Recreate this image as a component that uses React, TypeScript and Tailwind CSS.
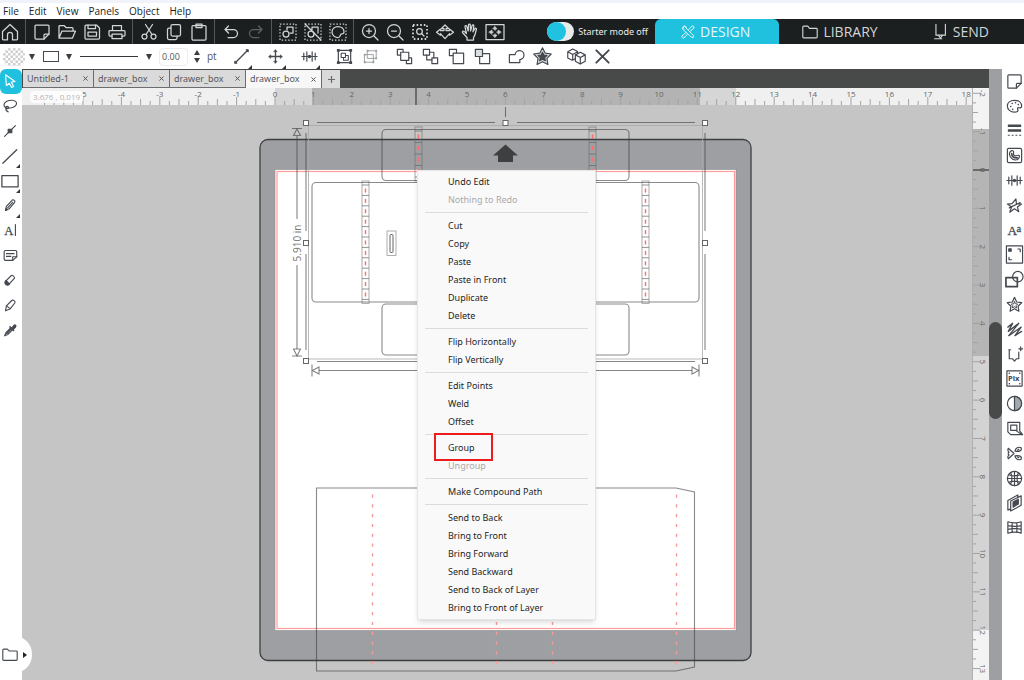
import { useState } from "react";
import type { ReactNode } from "react";

const UNIT = 38.4;

function Icon({ children, className = "size-5" }: { children: ReactNode; className?: string }) {
  return (
    <svg
      viewBox="0 0 20 20"
      className={`shrink-0 ${className}`}
      fill="none"
      stroke="currentColor"
      strokeWidth="1.25"
      strokeLinecap="round"
      strokeLinejoin="round"
      aria-hidden="true"
    >
      {children}
    </svg>
  );
}

type Tool = { label: string; icon: ReactNode; corner?: boolean; dim?: boolean };

const dashedBox = <rect x="2" y="2" width="16" height="16" strokeDasharray="1.4 1.8" strokeLinecap="butt" />;
const notePath = (
  <>
    <path d="M4 3h12a1 1 0 0 1 1 1v8l-5 5H4a1 1 0 0 1-1-1V4a1 1 0 0 1 1-1z" />
    <path d="M17 12h-4a1 1 0 0 0-1 1v4" />
  </>
);
const starPath = "M10 2.5l2.3 4.9 5.3.7-3.9 3.7 1 5.3-4.7-2.6-4.7 2.6 1-5.3-3.9-3.7 5.3-.7z";
const alignIcon = (
  <>
    <path d="M4 6.5v7M7.200 5v10M12.800 5v10M16 6.500v7M2 10h16" />
    <circle cx="10" cy="10" r="1.800" fill="currentColor" stroke="none" />
  </>
);

const mainGroups: Tool[][] = [
  [
    { label: "New", icon: notePath },
    { label: "Open", icon: <path d="M2 16V4.500a1 1 0 0 1 1-1h4l2 2h6a1 1 0 0 1 1 1V9M2 16l3-7h13.500l-3 7z" /> },
    {
      label: "Save",
      icon: (
        <>
          <path d="M3 4a1 1 0 0 1 1-1h10.500L17.500 6v10a1 1 0 0 1-1 1H4a1 1 0 0 1-1-1z" />
          <path d="M6 3v3.500h7.500V3M6 14v-4h8.500v4z" />
        </>
      ),
    },
    {
      label: "Print",
      icon: (
        <>
          <path d="M5.500 8.500V3.500h9v5M5 14H3a1 1 0 0 1-1-1V9.500a1 1 0 0 1 1-1h14a1 1 0 0 1 1 1V13a1 1 0 0 1-1 1h-2" />
          <path d="M5 12h10v4.500H5z" />
        </>
      ),
    },
  ],
  [
    {
      label: "Cut",
      icon: (
        <>
          <circle cx="5.500" cy="14.500" r="2.500" />
          <circle cx="14.500" cy="14.500" r="2.500" />
          <path d="M7 12.500L13.500 2.500M13 12.500L6.500 2.500" />
        </>
      ),
    },
    {
      label: "Copy",
      icon: (
        <>
          <rect x="7" y="2.500" width="9.500" height="11.500" rx="1.500" />
          <path d="M7 6H5a1.500 1.500 0 0 0-1.500 1.500V16A1.500 1.500 0 0 0 5 17.500h6.500A1.500 1.500 0 0 0 13 16v-2" />
        </>
      ),
    },
    {
      label: "Paste",
      icon: (
        <>
          <rect x="3" y="3.500" width="14" height="14.500" rx="1" />
          <path d="M7 2h6v3.500H7z" />
        </>
      ),
    },
  ],
  [
    { label: "Undo", icon: <path d="M7.500 4L4 7.500 7.500 11M4 7.500h8.500a4 4 0 0 1 0 8H7" /> },
    { label: "Redo", dim: true, icon: <path d="M12.500 4L16 7.500 12.500 11M16 7.500H7.500a4 4 0 0 0 0 8H13" /> },
  ],
  [
    {
      label: "Select all",
      icon: (
        <>
          {dashedBox}
          <path d="M9 5h6v6h-3M9 5v3" />
          <circle cx="8" cy="12" r="3" />
        </>
      ),
    },
    {
      label: "Deselect all",
      icon: (
        <>
          {dashedBox}
          <path d="M9 5h6v6M9 5v3M2 2l16 16" />
          <circle cx="8" cy="12" r="3" />
        </>
      ),
    },
    {
      label: "Select by color",
      icon: (
        <>
          {dashedBox}
          <path d="M10 4.500c3.500 0 6 2.300 6 5.500 0 1.500-1 1.800-2 1.800-1.800 0-1.500 1-1.800 2-.4 1.500-1.200 1.700-2.700 1.700-3 0-5.500-2.500-5.500-5.500s2.500-5.500 6-5.500z" />
        </>
      ),
    },
  ],
  [
    {
      label: "Zoom in",
      icon: (
        <>
          <circle cx="9" cy="9" r="6.500" />
          <path d="M14 14l4 4M6.500 9h5M9 6.500v5" />
        </>
      ),
    },
    {
      label: "Zoom out",
      icon: (
        <>
          <circle cx="9" cy="9" r="6.500" />
          <path d="M14 14l4 4M6.500 9h5" />
        </>
      ),
    },
    {
      label: "Zoom selection",
      icon: (
        <>
          <rect x="3" y="3" width="14" height="14" strokeWidth="1.800" strokeDasharray="1.600 2" strokeLinecap="butt" />
          <circle cx="9.500" cy="9.500" r="2.800" />
          <path d="M11.500 11.500l2.500 2.500" />
        </>
      ),
    },
    {
      label: "Drag zoom",
      icon: (
        <path d="M10 3L6.500 6.500H9v2H5.500V7L1.500 10.200l4 3v-1.500l4.500 5 4.500-5v1.500l4-3-4-3.200v1.500H11v-2h2.500z" />
      ),
    },
    {
      label: "Pan",
      icon: (
        <>
          <path d="M7 18v-2.500L2.500 10.500c-.6-1 .7-1.900 1.600-1.100L6.500 11.500 5 4.800c-.2-1.300 1.400-1.600 1.800-.4L8.200 9 8.500 2.900c.1-1.200 1.700-1.200 1.800 0L10.500 9l1.600-5.400c.4-1.200 1.900-.8 1.700.4L13 9.800l1.800-3.100c.6-1 2-.4 1.600.8L15 12.500c-.4 1.500-1 2.300-1.500 3V18z" />
        </>
      ),
    },
    {
      label: "Fit to window",
      icon: (
        <>
          <rect x="1" y="2.500" width="18" height="15" />
          <g fill="currentColor" strokeWidth=".6">
            <path d="M10 4.500l2 2.500H8zM10 15.500l2-2.500H8zM4 10l3-2v4zM16 10l-3-2v4z" />
          </g>
          <path d="M10 7v1M10 12v1M7 10h1M12 10h1" />
        </>
      ),
    },
  ],
];

const editGroups: Tool[][] = [
  [
    {
      label: "Group",
      icon: (
        <>
          <path d="M3.500 3.500h13v13h-13z" />
          <path d="M6.500 6.500h4.500v4.500H6.500zM11 9h3v5H9v-3" strokeWidth="1.100" />
          <g fill="currentColor" stroke="none">
            <path d="M2 2h3v3H2zM15 2h3v3h-3zM2 15h3v3H2zM15 15h3v3h-3z" />
          </g>
        </>
      ),
    },
    {
      label: "Ungroup",
      dim: true,
      icon: (
        <>
          <path d="M7 4h9v8H7zM4 8h9v8H4z" strokeWidth="1" />
          <g fill="currentColor" stroke="none">
            <path d="M6 3h2v2H6zM15 3h2v2h-2zM15 11h2v2h-2zM3 7h2v2H3zM3 15h2v2H3zM12 15h2v2h-2z" />
          </g>
        </>
      ),
    },
  ],
  [
    {
      label: "Bring to front",
      icon: (
        <>
          <path d="M6 8.500H2.500V2.500h6V5M12 15v2.500h5.500v-6H15" />
          <rect x="6" y="5.500" width="8.500" height="8.500" />
        </>
      ),
    },
    {
      label: "Bring forward",
      icon: (
        <>
          <rect x="2.500" y="2.500" width="6.500" height="6" />
          <rect x="11.500" y="11.500" width="6" height="6" />
          <path d="M9 5.500h4.500v6M6 8.500v5h5.500" />
        </>
      ),
    },
    {
      label: "Send backward",
      icon: (
        <>
          <path d="M6 9H2.500V2.500h7.500V6" />
          <rect x="6.500" y="6.500" width="11" height="11" />
        </>
      ),
    },
    {
      label: "Send to back",
      icon: (
        <>
          <rect x="2.500" y="2.500" width="7.500" height="7.500" fill="#dcdfe2" />
          <path d="M10 7h7.500v10.500H7V10" />
        </>
      ),
    },
  ],
  [
    {
      label: "Weld",
      icon: <path d="M2.500 8h6a4.700 4.700 0 1 1 5 5.200V16.500h-11z" />,
    },
    {
      label: "Offset",
      icon: (
        <>
          <path d="M10 .8l2.900 5.700 6.300.9-4.500 4.500 1 6.600L10 15.600l-5.700 2.900 1-6.600L.8 7.400l6.300-.9z" fill="#dcdfe2" />
          <path d="M10 5.500l1.400 3 3.300.4-2.400 2.300.7 3.200L10 12.800l-3 1.600.7-3.200-2.400-2.300 3.300-.4z" fill="currentColor" />
        </>
      ),
    },
  ],
  [
    {
      label: "Replicate",
      icon: (
        <>
          <path d="M8.500 12.500L5.500 14 .8 11.500V5L6 2l5.200 2.800V7M.8 5L6 7.800 11.200 5M6 7.800V13" />
          <path d="M14 5.500l5.200 2.800V15L14 18l-5.200-3V8.300zM8.800 8.300L14 11l5.200-2.700M14 11v7" />
        </>
      ),
    },
    { label: "Delete", icon: <path d="M3.500 3.500l13 13M16.500 3.500l-13 13" strokeWidth="2" /> },
  ],
];

const transformTools: Tool[] = [
  {
    label: "Line",
    corner: true,
    icon: (
      <>
        <path d="M4 16L16 4" strokeWidth="1.400" />
        <path d="M3 17v-2L5 17zM17 3v2L15 3z" fill="currentColor" />
      </>
    ),
  },
  {
    label: "Move",
    corner: true,
    icon: (
      <>
        <path d="M10 4v12M4 10h12" strokeWidth="1.400" />
        <path d="M10 2.800l1.800 2.200H8.200zM10 17.200l1.800-2.200H8.200zM2.800 10L5 8.200v3.600zM17.200 10L15 8.200v3.600z" fill="currentColor" strokeWidth=".5" />
      </>
    ),
  },
  { label: "Align", corner: true, icon: alignIcon },
];

const leftTools: Tool[] = [
  { label: "Select", icon: <path d="M5 3l10.500 7.500-4 .8 2.500 4.700-2.300 1.200-2.400-4.700L6 15z" /> },
  {
    label: "Lasso",
    icon: (
      <>
        <path d="M5.500 12C2.500 10.500 2.500 7 6 5c4-2 9.500-1.800 11 .8 1.300 2.700-1.500 5.500-5.500 6.200-2 .3-4 .2-5 0" />
        <path d="M6 10.500c1.500-.5 3 .5 2.500 1.700-.5 1-2.500 1-3 0-.3-.7 0-1.300.5-1.700zM5.300 12.500c0 2 .7 3.500 2.700 4" />
      </>
    ),
  },
  {
    label: "Edit points",
    icon: (
      <>
        <path d="M4 16L16 4" />
        <path d="M8 8h4v4H8z" fill="currentColor" />
      </>
    ),
  },
  { label: "Draw line", corner: true, icon: <path d="M2 18L17.500 3" strokeWidth="1.400" /> },
  { label: "Rectangle", corner: true, icon: <rect x="1" y="4" width="18" height="12.500" strokeWidth="1.400" /> },
  {
    label: "Pencil",
    corner: true,
    icon: (
      <>
        <path d="M5 16l1-4.500 6.500-7c1.200-1 3.700.9 2.700 2.500L9 14.200z" />
        <path d="M7.500 13l5.500-6" />
        <path d="M5 16l.7-2.200L7.300 15z" fill="currentColor" />
      </>
    ),
  },
  {
    label: "Text",
    icon: (
      <>
        <text x="3.500" y="15.500" fontSize="14" fontFamily="'Liberation Serif', serif" fill="currentColor" strokeWidth=".3">
          A
        </text>
        <path d="M16 4v12" />
      </>
    ),
  },
  {
    label: "Note",
    icon: (
      <>
        <path d="M5 5h11a1.500 1.500 0 0 1 1.500 1.500V12L13 16H5a1.500 1.500 0 0 1-1.500-1.500v-8A1.500 1.500 0 0 1 5 5z" />
        <path d="M6 8.500h8.500M6 11.500h5M17.500 12H13v4" />
      </>
    ),
  },
  {
    label: "Eraser",
    icon: (
      <>
        <path d="M5.500 11l6-6c1-.8 4 1.500 3.500 3l-6 6.500z" />
        <path d="M5.500 10.500l4 4c-1.500 1.700-3 1.500-4.300.3S4 12 5.500 10.500z" fill="currentColor" />
      </>
    ),
  },
  {
    label: "Knife",
    icon: (
      <>
        <path d="M5 16.500l1-5.500 6-6c1.500-1 4.200.5 3.500 2.500L10 14.500z" />
        <path d="M6 11l3.500 2.500" />
      </>
    ),
  },
  {
    label: "Eyedropper",
    icon: (
      <>
        <path d="M4 16.500l1.500-3.500L11 7.500l2 2L7.500 15z" />
        <path d="M10 6.500l4 4M12.500 8l2-3c1-1 2.500.3 1.500 1.500l-2.500 2.500z" fill="currentColor" strokeWidth="1.800" />
        <path d="M6.500 13.500l5-5" strokeWidth="2" />
      </>
    ),
  },
];

const rightTools: Tool[] = [
  { label: "Page setup", icon: notePath },
  {
    label: "Color fill",
    icon: (
      <>
        <path d="M10 3.500c4.500 0 7.500 2.500 7.500 6 0 2-1.500 2-3 1.800-1.700-.2-1.500 1-1 2.200.7 1.600-.8 2.500-3.500 2.500-4.500 0-7.500-3-7.500-6.500s3-6 7.500-6z" />
        <path d="M6 10h.1M7.500 6.800h.1M11 6h.1M14 8h.1M8 13h.1" strokeWidth="1.700" />
      </>
    ),
  },
  {
    label: "Line style",
    icon: (
      <>
        <path d="M3 5h14M3 10h14" strokeWidth="2.500" strokeLinecap="butt" />
        <path d="M3 15h14" strokeDasharray="2 2" strokeLinecap="butt" />
      </>
    ),
  },
  {
    label: "Trace",
    icon: (
      <>
        <rect x="2.500" y="2.500" width="15" height="15" rx="1.500" />
        <path d="M5.500 6c2-2 4-1 3.500 1.500s1.500 3.500 4 2.500 3 1.500 1 3.500-5.500 1.500-7.500-1S4 8 5.500 6z" />
        <path d="M7 8c0 3 2.500 5 6 4.500" strokeWidth="1.800" />
      </>
    ),
  },
  { label: "Align panel", icon: alignIcon },
  {
    label: "Transform",
    icon: <path d="M11.500 3l.5 5 5.500.5-4.500 3 1.500 5-4.500-3-5 3.500 2-5.500L2.500 8.500l5-.5zM4.500 12.500L16 7" />,
  },
  {
    label: "Text style",
    icon: (
      <g fill="currentColor" strokeWidth=".3" fontFamily="'Liberation Serif', serif">
        <text x="2.500" y="15" fontSize="14">
          A
        </text>
        <text x="12" y="11.500" fontSize="11">
          a
        </text>
      </g>
    ),
  },
  {
    label: "Registration marks",
    icon: (
      <>
        <rect x="1.500" y="1" width="17" height="18" />
        <path d="M4 4h2.500v2.500H4z" fill="currentColor" />
        <path d="M4.200 13v2.500H7M13.500 4.200H16V7" />
      </>
    ),
  },
  {
    label: "Modify",
    icon: (
      <>
        <rect x="1" y="8" width="12" height="9.500" strokeWidth="1.800" />
        <circle cx="13.500" cy="7" r="5.500" />
      </>
    ),
  },
  {
    label: "Offset panel",
    icon: (
      <>
        <path d={starPath} />
        <path d="M10 7l1 2.200 2.400.3-1.700 1.700.5 2.400-2.200-1.200-2.200 1.200.5-2.400-1.700-1.700 2.400-.3z" strokeWidth="1" />
      </>
    ),
  },
  {
    label: "Sketch",
    icon: <path d="M3 7.500L8 3.500 3.500 12 14.500 3.500 4 16.500 17 7.500 10.500 16.500 17.500 12" strokeWidth="1.400" />,
  },
  { label: "Cut settings", icon: <path d="M4.500 5v9.500H8l2 2.500 2-2.500h2.500V7.500M14.500 4h4M16.500 2v4M4 5h2" /> },
  {
    label: "PixScan",
    icon: (
      <>
        <rect x="2" y="2" width="16" height="16" />
        <path d="M4.500 4.500h.1M15.500 4.500h.1M4.500 15.500h.1M15.500 15.500h.1" strokeWidth="1.600" />
        <text x="3.200" y="13" fontSize="8" fontWeight="bold" fontFamily="'Open Sans', sans-serif" fill="currentColor" stroke="none">
          Pix
        </text>
      </>
    ),
  },
  {
    label: "Contrast",
    icon: (
      <>
        <circle cx="10" cy="10" r="7.500" />
        <path d="M10 2.500a7.500 7.500 0 0 1 0 15z" fill="#a3a9ae" />
      </>
    ),
  },
  {
    label: "Warp",
    icon: (
      <>
        <path d="M3 3.500h12.500v9l3 4H6L3 13.500zM12 12.500l6 4" />
        <rect x="6" y="6.500" width="6.500" height="5.500" />
      </>
    ),
  },
  {
    label: "Puzzle",
    icon: (
      <>
        <path d="M3.500 4.500L9.500 10l-6 5.500c-1-1.500-.3-3.500.8-4-1.300-1-1.300-2 0-3-1.100-.5-1.800-2.500-.8-4z" />
        <path d="M10.500 7.500c.5-3.500 3.500-5 6.500-3.500 1 3-2 4.500-6.500 3.500zM10.500 12.500c.5 3.500 3.500 5 6.500 3.500 1-3-2-4.500-6.500-3.500z" />
        <path d="M13 6.500l1.500-1M13 13.500l1.500 1" />
      </>
    ),
  },
  {
    label: "Sphere",
    icon: (
      <>
        <circle cx="10" cy="10" r="7.500" />
        <path d="M2.500 10h15M10 2.500v15M4 6c3.500 1.500 8.500 1.500 12 0M4 14c3.500-1.500 8.500-1.500 12 0" />
        <path d="M6 4c1.500 3.500 1.500 8.500 0 12M14 4c-1.500 3.500-1.500 8.500 0 12" />
      </>
    ),
  },
  {
    label: "Layers",
    icon: (
      <>
        <path d="M3 8l10.500-6v3M3 8v10l3-1.500M6 8.500L17 3v10L6 19z" />
        <path d="M8.500 9.500l5.500-3v5l-5.500 3.500z" fill="currentColor" />
      </>
    ),
  },
  {
    label: "Media layout",
    icon: <path d="M3 4c4.500 1.500 9.500 1.500 14 0v12c-4.500-1.500-9.500-1.500-14 0zM3 8c4.500 1 9.500 1 14 0M3 12c4.500-1 9.500-1 14 0M7.500 5v10M12.500 5v10" />,
  },
];

const contextMenu: { label: string; disabled?: boolean }[][] = [
  [{ label: "Undo Edit" }, { label: "Nothing to Redo", disabled: true }],
  [
    { label: "Cut" },
    { label: "Copy" },
    { label: "Paste" },
    { label: "Paste in Front" },
    { label: "Duplicate" },
    { label: "Delete" },
  ],
  [{ label: "Flip Horizontally" }, { label: "Flip Vertically" }],
  [{ label: "Edit Points" }, { label: "Weld" }, { label: "Offset" }],
  [{ label: "Group" }, { label: "Ungroup", disabled: true }],
  [{ label: "Make Compound Path" }],
  [
    { label: "Send to Back" },
    { label: "Bring to Front" },
    { label: "Bring Forward" },
    { label: "Send Backward" },
    { label: "Send to Back of Layer" },
    { label: "Bring to Front of Layer" },
  ],
];

function Corner() {
  return (
    <svg viewBox="0 0 4 4" className="absolute right-0.5 bottom-0 size-1" aria-hidden="true">
      <path d="M4 0v4H0z" fill="#33373c" />
    </svg>
  );
}

function DownArrow({ label }: { label: string }) {
  return (
    <button aria-label={label} className="flex h-full w-[14px] items-center justify-center">
      <svg viewBox="0 0 6 6" className="size-[6px]" aria-hidden="true">
        <path d="M0 0h6L3 6z" fill="#3b3f45" />
      </svg>
    </button>
  );
}

function MenuBar() {
  return (
    <nav className="flex h-4 items-center gap-[10px] bg-white px-[3px] text-[10px] leading-4 text-[#222]">
      {["File", "Edit", "View", "Panels", "Object", "Help"].map((item) => (
        <button key={item}>{item}</button>
      ))}
    </nav>
  );
}

function MainBar() {
  const [starter, setStarter] = useState(false);

  return (
    <header className="flex h-[25px] items-stretch bg-[#1b1f20] text-[#d3d6d7]">
      <div className="flex w-[26px] border-r border-[#55595a]">
        <button aria-label="Home" className="flex w-5 items-center justify-center">
          <Icon>
            <path d="M2.500 9.500L10 2.500l7.500 7V17a.8.8 0 0 1-.8.8h-4.200v-5a2.500 2.500 0 0 0-5 0v5H3.300a.8.8 0 0 1-.8-.8z" />
          </Icon>
        </button>
      </div>
      {mainGroups.map((group, i) => (
        <div key={i} className="flex border-r border-[#55595a] px-[3px] last-of-type:border-0">
          {group.map((tool) => (
            <button
              key={tool.label}
              aria-label={tool.label}
              className={`flex w-[25px] items-center justify-center ${tool.dim ? "text-[#5d6162]" : ""}`}
            >
              <Icon>{tool.icon}</Icon>
            </button>
          ))}
        </div>
      ))}
      <label className="ml-auto flex items-center gap-1 pr-[7px] font-['Noto_Sans','Open_Sans',sans-serif] text-[9px] whitespace-nowrap text-[#eceeee]">
        <input
          type="checkbox"
          role="switch"
          checked={starter}
          onChange={(e) => setStarter(e.target.checked)}
          className="h-[19px] w-[27px] appearance-none rounded-full bg-[#e9eaea] before:block before:size-[19px] before:rounded-full before:bg-[#1fc3e0] checked:before:ml-2"
        />
        Starter mode off
      </label>
      <nav className="flex w-[369px] text-[14px]">
        <a href="#design" className="flex flex-1 items-center justify-center gap-1 rounded-t-md bg-[#1fc1de] pr-1 text-[#e4f8fc]">
          <Icon className="size-4">
            <path d="M3 5.500L5.500 3 17 14.500 16.500 17 14.500 16.500zM11 7l4-4.500c1.500-.5 3 1 2.500 2.500L13 9M7 11l-4.500 4c-.5 1.500 1 3 2.500 2.500L9 13M4.500 6.500c-2-2-.5-4.500 1.500-4s2 2 2 3" />
          </Icon>
          DESIGN
        </a>
        <a href="#library" className="flex flex-1 items-center justify-center gap-1">
          <Icon className="size-[18px]">
            <path d="M2 4.500a1 1 0 0 1 1-1h4.500l2 2.500H17a1 1 0 0 1 1 1v8.500a1 1 0 0 1-1 1H3a1 1 0 0 1-1-1z" />
          </Icon>
          LIBRARY
        </a>
        <a href="#send" className="flex flex-1 items-center justify-center gap-1 pr-1">
          <Icon className="size-[18px]">
            <path d="M5.500 1.500v12H8l2.500 3 2.500-3h3v-12M4 17.500h8M8 13.500h5" />
          </Icon>
          SEND
        </a>
      </nav>
    </header>
  );
}

function ToolButton({ tool }: { tool: Tool }) {
  return (
    <button
      aria-label={tool.label}
      className={`relative flex h-full w-[26px] items-center justify-center ${tool.dim ? "text-[#9a9da1]" : ""}`}
    >
      <Icon className="size-[19px]">{tool.icon}</Icon>
      {tool.corner && <Corner />}
    </button>
  );
}

function StyleBar() {
  return (
    <div className="flex h-[25px] items-center bg-white pl-[3px] text-[#44484f]">
      <button aria-label="Fill color" className="w-[22px]">
        <svg viewBox="0 0 22 18" className="h-[18px] w-[22px]" aria-hidden="true">
          <defs>
            <pattern id="checker" width="5" height="5" patternUnits="userSpaceOnUse">
              <path d="M0 0h2.500v2.500H0zM2.500 2.500h2.500v2.500H2.500z" fill="#cfcfcf" />
            </pattern>
          </defs>
          <rect width="22" height="18" rx="7" fill="url(#checker)" />
        </svg>
      </button>
      <DownArrow label="Fill options" />
      <button aria-label="Line color" className="flex w-[23px] justify-center">
        <span className="h-[11px] w-4 border border-[#44484f]" />
      </button>
      <DownArrow label="Line color options" />
      <button aria-label="Line style" className="flex w-[66px] justify-center">
        <span className="h-px w-[58px] bg-[#33373c]" />
      </button>
      <DownArrow label="Line style options" />
      <input
        aria-label="Line thickness"
        defaultValue="0.00"
        className="ml-[3px] h-[18px] w-[29px] rounded-sm border border-[#ececec] px-0.5 text-[9px] text-[#555]"
      />
      <div className="ml-1 flex w-[10px] flex-col items-center gap-[3px]">
        <button aria-label="Increase thickness">
          <svg viewBox="0 0 6 5" className="h-[5px] w-[6px]" aria-hidden="true">
            <path d="M0 5h6L3 0z" fill="#3b3f45" />
          </svg>
        </button>
        <button aria-label="Decrease thickness">
          <svg viewBox="0 0 6 5" className="h-[5px] w-[6px]" aria-hidden="true">
            <path d="M0 0h6L3 5z" fill="#3b3f45" />
          </svg>
        </button>
      </div>
      <span className="w-[26px] pl-[5px] text-[10px] text-[#555]">pt</span>
      <div className="flex h-full gap-2">
        {transformTools.map((tool) => (
          <ToolButton key={tool.label} tool={tool} />
        ))}
      </div>
      <div className="ml-[9px] flex h-full gap-2">
        {editGroups.map((group, i) => (
          <div key={i} className="flex">
            {group.map((tool) => (
              <ToolButton key={tool.label} tool={tool} />
            ))}
          </div>
        ))}
      </div>
    </div>
  );
}

function DocumentTabs() {
  return (
    <div className="flex h-[19px] bg-[#484a49] pt-px pl-px text-[9px] text-[#55585c]">
      {["Untitled-1", "drawer_box", "drawer_box", "drawer_box"].map((name, i) => (
        <div
          key={i}
          className={`flex items-center justify-between border-r border-[#6b6d6e] pr-[5px] pl-1 ${i === 0 ? "w-[71px]" : "w-[76px]"} ${
            i === 3 ? "bg-[#f7f7f7]" : "border-b bg-[#dadada]"
          }`}
        >
          <button className="font-['Noto_Sans','Open_Sans',sans-serif] leading-4">{name}</button>
          <button aria-label={`Close ${name}`}>
            <svg viewBox="0 0 6 6" className="size-[5px]" aria-hidden="true">
              <path d="M.5.5l5 5M5.500.5l-5 5" stroke="#55585c" strokeWidth="1.200" />
            </svg>
          </button>
        </div>
      ))}
      <button aria-label="New document" className="flex w-[18px] items-center justify-center bg-[#dadada]">
        <svg viewBox="0 0 7 7" className="size-[7px]" aria-hidden="true">
          <path d="M3.500 0v7M0 3.500h7" stroke="#66696d" strokeWidth="1.200" />
        </svg>
      </button>
    </div>
  );
}

const quarters = (from: number, to: number) => Array.from({ length: (to - from) * 4 + 1 }, (_, i) => from + i / 4);
const tickLength = (v: number) => (v % 1 === 0 ? 8 : v % 0.5 === 0 ? 6 : 4);

function HorizontalRuler() {
  const x = (v: number) => 253 + v * UNIT;
  return (
    <div className="relative h-[17px] overflow-hidden bg-[#f0f0f0]">
      <svg width="950" height="17" className="block max-w-none" aria-hidden="true">
        <rect x="253" width="461" height="17" fill="#d6d6d6" />
        <rect x="290" width="388" height="17" fill="#b3b3b3" />
        {quarters(-6, 18).map((v) => (
          <path key={v} d={`M${x(v)} 17v-${tickLength(v)}`} stroke="#a3a3a3" strokeWidth="1" />
        ))}
        {quarters(-5, 18)
          .filter((v) => v % 1 === 0)
          .map((v) => (
            <text key={v} x={x(v)} y="9" fontSize="8" textAnchor="middle" fill="#666">
              {v}
            </text>
          ))}
        <path d="M394 0v17" stroke="#555" strokeWidth="1.500" />
      </svg>
      <span className="absolute top-[3px] left-2 rounded-sm bg-white/80 px-[3px] text-[8px] leading-3 whitespace-nowrap text-[#b5b5b5]">
        3.676 , 0.019
      </span>
    </div>
  );
}

function VerticalRuler() {
  const y = (v: number) => 82 + v * 38.35;
  return (
    <div className="w-[17px] overflow-hidden bg-[#f3f3f3]">
      <svg width="17" height="592" className="block" aria-hidden="true">
        <rect y="41" width="17" height="501" fill="#d3d3d3" />
        <rect y="41" width="17" height="227" fill="#b5b5b5" />
        {quarters(-2, 13).map((v) => (
          <path key={v} d={`M0 ${y(v)}h${tickLength(v)}`} stroke="#a3a3a3" strokeWidth="1" />
        ))}
        {quarters(-2, 13)
          .filter((v) => v % 1 === 0)
          .map((v) => (
            <text key={v} transform={`translate(8 ${y(v)}) rotate(90)`} fontSize="8" textAnchor="middle" fill="#666">
              {v}
            </text>
          ))}
        <path d="M0 82h17" stroke="#555" strokeWidth="1.500" />
        <path d="M.5 0v592" stroke="#b0b0b0" strokeWidth="1" />
      </svg>
    </div>
  );
}

// perforated fold strip: a column of cells with a red mark in each
function Strip({ x, y, cells, pitch }: { x: number; y: number; cells: number; pitch: number }) {
  const rows = Array.from({ length: cells }, (_, i) => y + i * pitch);
  return (
    <g>
      <rect x={x} y={y - 4} width="7" height={cells * pitch + 8} stroke="#666" strokeOpacity=".6" strokeWidth=".9" />
      {rows.map((row) => (
        <path key={row} d={`M${x} ${row}h7`} stroke="#666" strokeOpacity=".7" strokeWidth="1" />
      ))}
      <path d={`M${x} ${y + cells * pitch}h7`} stroke="#666" strokeOpacity=".7" strokeWidth="1" />
      {rows.map((row) => (
        <path key={row} d={`M${x + 3.5} ${row + 3.5}v4`} stroke="#ff6b6b" strokeWidth="1.400" />
      ))}
    </g>
  );
}

function Handle({ x, y }: { x: number; y: number }) {
  return <rect x={x - 2.5} y={y - 2.5} width="5" height="5" fill="#fff" stroke="#666" strokeWidth="1" />;
}

function Drawing() {
  return (
    <svg width="950" height="575" viewBox="22 105 950 575" className="block max-w-none" fill="none" aria-hidden="true">
      <rect x="260" y="139.500" width="491" height="521" rx="8" fill="#9e9fa2" stroke="#3d3f40" strokeWidth="1.300" />
      <rect x="275" y="169.500" width="461" height="461" fill="#fff" stroke="#8a8a8c" strokeWidth=".6" />
      <rect x="277" y="171.500" width="457.500" height="457" stroke="#ff9c9c" strokeWidth="1.200" />
      <path d="M505.500 144.500l12.500 11h-5v6.500h-15v-6.500h-5z" fill="#3d3f40" />

      <g stroke="#3c3c3c" strokeOpacity=".6" strokeWidth="1.100">
        <rect x="382" y="129.500" width="247" height="51" rx="4" />
        <rect x="382" y="304" width="247" height="51" rx="4" />
        <rect x="312" y="182.500" width="387" height="119.500" rx="4" />
        <path d="M316.500 671V488H676l18.500 4v175L676 671z" />
      </g>
      <rect x="387" y="231" width="9" height="24.500" stroke="#999" strokeWidth=".8" />
      <rect x="390" y="234.500" width="3" height="18" rx="1" stroke="#666" strokeWidth="1" />

      <Strip x={362} y={185} cells={11} pitch={10.4} />
      <Strip x={642} y={185} cells={11} pitch={10.4} />
      <Strip x={415} y={131} cells={4} pitch={11.5} />
      <Strip x={589} y={131} cells={4} pitch={11.5} />

      <g stroke="#f79a9a" strokeWidth="1.400" strokeDasharray="3.200 6.600">
        <path d="M372.500 494.500V665M496.500 494.500V665M552.500 494.500V665M676.500 494.500V665" />
      </g>

      <rect x="308.500" y="125.500" width="394" height="233.500" stroke="#aaa" strokeWidth=".8" />
      <g stroke="#444" strokeOpacity=".65" strokeWidth="1.100">
        <path d="M317 122.500h178M517 122.500h178M317 361.500h178M517 361.500h178" />
        <path d="M306 133v98M306 254v96M705 133v98M705 254v96M505.500 107v10" />
        <path d="M292 128.500h10M297 136v83M297 265v84M292 356h10" />
        <path d="M297 129l3.500 6.500h-7zM297 356l3.500-7h-7z" />
        <path d="M312 364.500v12M319 370.500h373M699 364.500v12" />
        <path d="M312.500 370.500l6.500-3.500v7zM698.500 370.500l-6.500-3.500v7z" />
      </g>
      <text transform="translate(301 243) rotate(-90)" fontSize="10" textAnchor="middle" fill="#777">
        5.910 in
      </text>
      {[306, 705].map((x) => [123, 243, 361].map((y) => <Handle key={`${x}-${y}`} x={x} y={y} />))}
      <Handle x={505.5} y={123} />
    </svg>
  );
}

function ContextMenu() {
  return (
    <div
      role="menu"
      className="absolute top-[65px] left-[395px] w-[179px] border border-[#e6e6e6] bg-[#f9f9f9] py-0.5 font-['Noto_Sans','Open_Sans',sans-serif] text-[9px] text-[#1f1f24] shadow-md"
    >
      {contextMenu.map((section, i) => (
        <div key={i}>
          {i > 0 && <hr className="mx-[7px] mt-[3px] mb-1 h-px border-0 bg-[#dcdcdc]" />}
          {section.map((item) => (
            <button
              key={item.label}
              role="menuitem"
              disabled={item.disabled}
              className="relative block h-[18px] w-full pl-[30px] text-left leading-[18px] hover:bg-[#ececec] disabled:text-[#a9a9a9]"
            >
              {item.label}
              {item.label === "Group" && (
                <span className="absolute -top-[6px] left-4 h-7 w-[59px] border-2 border-[#ee1c1c]" />
              )}
            </button>
          ))}
        </div>
      ))}
    </div>
  );
}

export default function App() {
  const [active, setActive] = useState("Select");

  return (
    <div className="flex h-screen flex-col overflow-hidden bg-white font-['Open_Sans','Noto_Sans',sans-serif]">
      <div className="h-[3px] bg-[#f1f3fb]" />
      <MenuBar />
      <MainBar />
      <StyleBar />

      <div className="flex min-h-0 flex-1">
        <aside className="relative z-10 flex w-[22px] flex-col justify-between bg-white text-[#44484f]">
          <div className="flex h-[273px] flex-col">
            {leftTools.map((tool) => (
              <button
                key={tool.label}
                aria-label={tool.label}
                onClick={() => setActive(tool.label)}
                className={`relative flex w-full flex-1 items-center pl-px ${
                  active === tool.label ? "rounded-md bg-[#1fc1de] text-white" : ""
                }`}
              >
                <Icon className="size-[18px]">{tool.icon}</Icon>
                {tool.corner && <Corner />}
              </button>
            ))}
          </div>
          <button
            aria-label="Show library"
            className="mb-[7px] flex h-[37px] w-8 items-center gap-1 rounded-r-[18px] bg-white pl-px"
          >
            <Icon className="size-[18px]">
              <path d="M2 4.500a1 1 0 0 1 1-1h4l2 2h8a1 1 0 0 1 1 1v8.500a1 1 0 0 1-1 1H3a1 1 0 0 1-1-1z" />
            </Icon>
            <svg viewBox="0 0 4 6" className="h-[6px] w-1" aria-hidden="true">
              <path d="M0 0l4 3-4 3z" fill="#222" />
            </svg>
          </button>
        </aside>

        <div className="flex min-w-0 flex-1 flex-col">
          <DocumentTabs />
          <div className="flex min-h-0 flex-1">
            <main className="flex min-w-0 flex-1 flex-col bg-[#c5c5c5]">
              <HorizontalRuler />
              <div className="relative min-h-0 flex-1">
                <Drawing />
                <ContextMenu />
              </div>
            </main>
            <VerticalRuler />
          </div>
        </div>

        <div className="w-[13px] bg-[#9e9fa2] pt-[253px]">
          <div className="h-[97px] rounded-full bg-[#484a49]" />
        </div>

        <aside className="w-[22px] bg-white text-[#44484f]">
          <div className="flex h-[471px] flex-col">
            {rightTools.map((tool) => (
              <button key={tool.label} aria-label={tool.label} className="flex w-full flex-1 items-center justify-end">
                <Icon className="size-[19px]">{tool.icon}</Icon>
              </button>
            ))}
          </div>
        </aside>
      </div>
    </div>
  );
}
